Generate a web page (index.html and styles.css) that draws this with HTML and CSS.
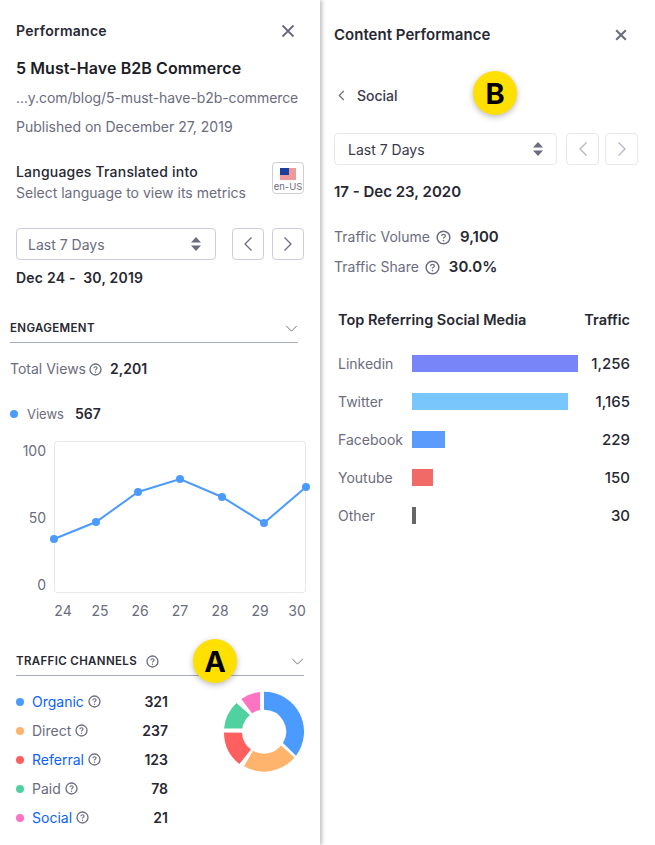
FILE: index.html
```html
<!DOCTYPE html>
<html lang="en">
<head>
<meta charset="utf-8">
<title>Content Performance</title>
<link rel="stylesheet" href="styles.css">
</head>
<body>
<svg class="defs" width="0" height="0" aria-hidden="true">
  <symbol id="help" viewBox="0 0 13 13">
    <circle cx="6.5" cy="6.5" r="5.5" fill="none" stroke="currentColor" stroke-width="1.3"/>
    <path d="M4.9 5.2c0-.9.7-1.4 1.6-1.4s1.6.5 1.6 1.3c0 1.2-1.6 1.1-1.6 2.3" fill="none" stroke="currentColor" stroke-width="1.1"/>
    <circle cx="6.5" cy="9.2" r=".7" fill="currentColor"/>
  </symbol>
  <symbol id="close" viewBox="0 0 14 14">
    <path d="M1.5 1.5l11 11M12.5 1.5l-11 11" fill="none" stroke="currentColor" stroke-width="1.9"/>
  </symbol>
  <symbol id="close-bold" viewBox="0 0 12 12">
    <path d="M1.2 1.2l9.6 9.6M10.8 1.2l-9.6 9.6" fill="none" stroke="currentColor" stroke-width="2.1"/>
  </symbol>
  <symbol id="updown" viewBox="0 0 10 14">
    <path d="M5 0l5 5.5H0zM5 14L0 8.5h10z" fill="currentColor"/>
  </symbol>
  <symbol id="left" viewBox="0 0 10 16">
    <path d="M8.5 1.5L2 8l6.5 6.5" fill="none" stroke="currentColor" stroke-width="1.3"/>
  </symbol>
  <symbol id="right" viewBox="0 0 10 16">
    <path d="M1.5 1.5L8 8l-6.5 6.5" fill="none" stroke="currentColor" stroke-width="1.3"/>
  </symbol>
  <symbol id="back" viewBox="0 0 7 11">
    <path d="M5.8 1L1.3 5.5 5.8 10" fill="none" stroke="currentColor" stroke-width="1.2"/>
  </symbol>
  <symbol id="down" viewBox="0 0 14 8">
    <path d="M1 1l6 6 6-6" fill="none" stroke="currentColor" stroke-width="1.1"/>
  </symbol>
</svg>

<div class="page">
  <aside class="panel panel-left">
    <header class="head head-left">
      <h1 class="panel-title">Performance</h1>
      <svg class="icon-close icon-close-left"><use href="#close"/></svg>
    </header>
    <h2 class="article">5 Must-Have B2B Commerce</h2>
    <p class="meta url">...y.com/blog/5-must-have-b2b-commerce</p>
    <p class="meta published">Published on December 27, 2019</p>

    <div class="lang">
      <div>
        <div class="lang-title">Languages Translated into</div>
        <div class="lang-sub">Select language to view its metrics</div>
      </div>
      <button class="flag-btn">
        <svg class="flag" viewBox="0 0 16 12">
          <rect width="16" height="12" fill="#ef9a9a"/>
          <rect width="9" height="7" fill="#1c3f9e"/>
        </svg>
        <span>en-US</span>
      </button>
    </div>

    <div class="controls controls-left">
      <div class="select select-left">
        <span>Last 7 Days</span>
        <svg class="updown"><use href="#updown"/></svg>
      </div>
      <button class="nav-btn"><svg class="nav-icon"><use href="#left"/></svg></button>
      <button class="nav-btn"><svg class="nav-icon"><use href="#right"/></svg></button>
    </div>
    <div class="range range-left">Dec 24 -&nbsp; 30, 2019</div>

    <div class="section-head section-engagement">
      <span>ENGAGEMENT</span>
      <svg class="chev"><use href="#down"/></svg>
    </div>
    <div class="stat stat-total">
      <span class="stat-label">Total Views</span>
      <svg class="help"><use href="#help"/></svg>
      <strong>2,201</strong>
    </div>
    <div class="views">
      <i class="dot dot-blue"></i>
      <span class="stat-label">Views</span>
      <strong>567</strong>
    </div>

    <svg class="chart" viewBox="10 436 316 189">
      <rect x="54.5" y="441.5" width="251" height="151" rx="3" fill="#fff" stroke="#e7e7ed"/>
      <g class="chart-y">
        <text x="46" y="456">100</text>
        <text x="46" y="523">50</text>
        <text x="46" y="590">0</text>
      </g>
      <g class="chart-x">
        <text x="63" y="616">24</text>
        <text x="100" y="616">25</text>
        <text x="140" y="616">26</text>
        <text x="180" y="616">27</text>
        <text x="220" y="616">28</text>
        <text x="260" y="616">29</text>
        <text x="297" y="616">30</text>
      </g>
      <polyline points="54,539 96,522 138,492 180,479 222,497 264,523 306,487" fill="none" stroke="#4b9bff" stroke-width="2"/>
      <g fill="#4b9bff">
        <circle cx="54" cy="539" r="4"/>
        <circle cx="96" cy="522" r="4"/>
        <circle cx="138" cy="492" r="4"/>
        <circle cx="180" cy="479" r="4"/>
        <circle cx="222" cy="497" r="4"/>
        <circle cx="264" cy="523" r="4"/>
        <circle cx="306" cy="487" r="4"/>
      </g>
    </svg>

    <div class="section-head section-traffic">
      <span class="section-with-help">TRAFFIC CHANNELS <svg class="help"><use href="#help"/></svg></span>
      <svg class="chev"><use href="#down"/></svg>
    </div>
    <div class="channels">
      <ul class="channel-list">
        <li><i class="dot dot-blue"></i><a class="link">Organic</a><svg class="help"><use href="#help"/></svg><b>321</b></li>
        <li><i class="dot dot-orange"></i><span class="stat-label">Direct</span><svg class="help"><use href="#help"/></svg><b>237</b></li>
        <li><i class="dot dot-red"></i><a class="link">Referral</a><svg class="help"><use href="#help"/></svg><b>123</b></li>
        <li><i class="dot dot-green"></i><span class="stat-label">Paid</span><svg class="help"><use href="#help"/></svg><b>78</b></li>
        <li><i class="dot dot-pink"></i><a class="link">Social</a><svg class="help"><use href="#help"/></svg><b>21</b></li>
      </ul>
      <svg class="donut" viewBox="224 691 80 81">
        <path fill="#4b9bff" d="M264 691.7A40 40 0 0 1 296 755.7L283 743A22 22 0 0 0 264 709.7Z"/>
        <path fill="#ffb46e" d="M294.5 757.5A40 40 0 0 1 244 766.3L253 750.7A22 22 0 0 0 281 745.5Z"/>
        <path fill="#ff5f5f" d="M224 732.5A40 40 0 0 0 239.3 764L251 749.5A22 22 0 0 1 242 732.7Z"/>
        <path fill="#50d2a0" d="M224 728.5A40 40 0 0 1 236.5 703L250 715A22 22 0 0 0 242.3 728.5Z"/>
        <path fill="#ff73c3" d="M241.3 699A40 40 0 0 1 260 691.9L260 710A22 22 0 0 0 252 713.3Z"/>
      </svg>
    </div>
  </aside>

  <main class="panel panel-right">
    <header class="head head-right">
      <h1 class="panel-title panel-title-lg">Content Performance</h1>
      <svg class="icon-close icon-close-right"><use href="#close-bold"/></svg>
    </header>
    <div class="back">
      <svg class="back-icon"><use href="#back"/></svg>
      <span>Social</span>
    </div>
    <div class="controls controls-right">
      <div class="select select-right">
        <span>Last 7 Days</span>
        <svg class="updown"><use href="#updown"/></svg>
      </div>
      <button class="nav-btn nav-light"><svg class="nav-icon"><use href="#left"/></svg></button>
      <button class="nav-btn nav-light"><svg class="nav-icon"><use href="#right"/></svg></button>
    </div>
    <div class="range range-right">17 - Dec 23, 2020</div>
    <div class="stat stat-volume">
      <span class="stat-label">Traffic Volume</span>
      <svg class="help help-lg"><use href="#help"/></svg>
      <strong>9,100</strong>
    </div>
    <div class="stat stat-share">
      <span class="stat-label">Traffic Share</span>
      <svg class="help help-lg"><use href="#help"/></svg>
      <strong>30.0%</strong>
    </div>

    <div class="table">
      <div class="table-head"><span>Top Referring Social Media</span><span>Traffic</span></div>
      <div class="table-row"><span class="stat-label">Linkedin</span><div class="track"><i class="bar bar-linkedin" style="width:166px"></i></div><b>1,256</b></div>
      <div class="table-row"><span class="stat-label">Twitter</span><div class="track"><i class="bar bar-twitter" style="width:156px"></i></div><b>1,165</b></div>
      <div class="table-row"><span class="stat-label">Facebook</span><div class="track"><i class="bar bar-facebook" style="width:33px"></i></div><b>229</b></div>
      <div class="table-row"><span class="stat-label">Youtube</span><div class="track"><i class="bar bar-youtube" style="width:21px"></i></div><b>150</b></div>
      <div class="table-row"><span class="stat-label">Other</span><div class="track"><i class="bar bar-other" style="width:4px"></i></div><b>30</b></div>
    </div>
  </main>

  <div class="badge badge-a">A</div>
  <div class="badge badge-b">B</div>
</div>
</body>
</html>
```
FILE: styles.css
```css
* { box-sizing: border-box; }
html, body { margin: 0; padding: 0; background: #fff; }
body {
  font-family: Inter, "Liberation Sans", sans-serif;
  font-size: 14px;
  color: #272833;
  overflow: hidden;
}
.defs { display: block; width: 0; height: 0; }
h1, h2, p, ul { margin: 0; padding: 0; }
ul { list-style: none; }
button { font-family: inherit; background: #fff; padding: 0; margin: 0; }

.page { position: relative; display: flex; width: 655px; height: 845px; overflow: hidden; }
.panel { height: 845px; background: #fff; }
.panel-left {
  width: 320px;
  padding: 0 16px;
  position: relative;
  z-index: 1;
  box-shadow: 2px 0 4px rgba(0, 0, 0, .26);
}
.panel-right { width: 335px; padding: 0 17px 0 14px; }

.head { display: flex; align-items: center; justify-content: space-between; height: 22px; }
.head-left { margin-top: 20px; }
.head-right { margin-top: 24px; }
.panel-title { font-size: 14px; line-height: 22px; font-weight: 600; letter-spacing: .26px; }
.panel-title-lg { font-size: 15px; letter-spacing: .02px; }
.icon-close { width: 14px; height: 14px; color: #6b6c7e; }
.icon-close-left { margin-right: 9px; }
.icon-close-right { width: 12px; height: 12px; margin-right: 11px; }

.article { margin-top: 15px; font-size: 16px; line-height: 22px; font-weight: 600; color: #1c1d26; letter-spacing: .08px; }
.meta { font-size: 14px; line-height: 20px; color: #6b6c7e; }
.url { margin-top: 9px; letter-spacing: -.08px; }
.published { margin-top: 9px; }

.lang { display: flex; justify-content: space-between; align-items: flex-start; margin-top: 25px; }
.lang-title { font-size: 14px; line-height: 20px; font-weight: 500; letter-spacing: .2px; }
.lang-sub { margin-top: 1px; font-size: 14px; line-height: 20px; color: #6b6c7e; }
.flag-btn {
  width: 32px; height: 32px;
  border: 1px solid #cdced9; border-radius: 4px;
  display: flex; flex-direction: column; align-items: center;
  padding-top: 5px;
  color: #6b6c7e;
}
.flag { width: 16px; height: 12px; display: block; }
.flag-btn span { font-size: 9.5px; line-height: 12px; margin-top: 1px; }

.controls { display: flex; }
.controls-left { margin-top: 25px; gap: 8px; }
.controls-right { margin-top: 28px; gap: 6px; }
.select {
  height: 32px; display: flex; align-items: center; justify-content: space-between;
  border: 1px solid #cdced9; border-radius: 4px;
  padding: 0 14px 0 11px; color: #6b6c7e;
}
.select-left { width: 200px; margin-right: 8px; }
.select-right { width: 223px; margin-right: 3px; padding-left: 13px; padding-right: 13px; border-color: #e7e7ed; color: #393a4a; }
.updown { width: 10px; height: 14px; color: #6b6c7e; }
.nav-btn {
  width: 32px; height: 32px;
  border: 1px solid #cdced9; border-radius: 4px;
  display: flex; align-items: center; justify-content: center;
  color: #6b6c7e;
}
.nav-light { width: 33px; border-color: #e7e7ed; color: #b5b6c4; }
.nav-icon { width: 10px; height: 16px; }

.range { font-weight: 600; line-height: 20px; }
.range-left { margin-top: 8px; letter-spacing: .22px; }
.range-right { margin-top: 17px; font-size: 15px; }

.section-head {
  display: flex; align-items: center; justify-content: space-between;
  height: 25px; padding-bottom: 4px;
  font-size: 11.5px; font-weight: 600; letter-spacing: .35px;
}
.section-engagement { margin: 30px 6px 0 -6px; border-bottom: 1px solid #a7a9bc; }
.section-traffic { margin-top: 26px; border-bottom: 1px solid #a7a9bc; }
.section-with-help { display: flex; align-items: center; gap: 9px; }
.chev { width: 13px; height: 7px; color: #6b6c7e; }

.help { width: 13px; height: 13px; color: #6b6c7e; flex: none; }
.help-lg { width: 15px; height: 15px; }

.stat { display: flex; align-items: center; line-height: 20px; }
.stat strong { font-weight: 600; }
.stat-label { color: #6b6c7e; }
.stat-total { margin: 16px 0 0 -6px; }
.stat-total .help { margin: 0 8px 0 3px; }

.views { display: flex; align-items: center; margin: 25px 0 0 -6px; line-height: 20px; }
.views .stat-label { margin: 0 11px 0 9px; font-size: 13px; }
.views strong { font-weight: 600; }

.dot { display: block; width: 8px; height: 8px; border-radius: 50%; flex: none; }
.dot-blue { background: #4b9bff; }
.dot-orange { background: #ffb46e; }
.dot-red { background: #ff5f5f; }
.dot-green { background: #50d2a0; }
.dot-pink { background: #ff73c3; }

.chart { display: block; width: 316px; height: 189px; margin: 12px 0 0 -6px; overflow: visible; }
.chart text { font-family: Inter, "Liberation Sans", sans-serif; font-size: 14px; fill: #6b6c7e; }
.chart-y text { text-anchor: end; }
.chart-x text { text-anchor: middle; }

.channels { display: flex; justify-content: space-between; align-items: flex-start; margin-top: 11px; }
.channel-list { width: 152px; }
.channel-list li { display: flex; align-items: center; height: 29px; }
.channel-list .dot { margin-right: 8px; }
.channel-list .help { margin-left: 4px; }
.channel-list b { margin-left: auto; font-weight: 600; }
.link { color: #0b5fff; }
.donut { width: 80px; height: 81px; margin-top: 4px; display: block; }

.back { display: flex; align-items: center; margin-top: 39px; height: 20px; font-weight: 500; color: #393a4a; }
.back-icon { width: 7px; height: 11px; margin: 0 12px 0 4px; color: #6b6c7e; }

.stat-volume { margin-top: 25px; }
.stat-share { margin-top: 10px; }
.stat-volume .help, .stat-share .help { margin: 0 9px 0 6px; }
.stat-volume strong, .stat-share strong { font-size: 15px; }

.table { margin-top: 33px; padding: 0 8px 0 4px; }
.table-head { display: flex; justify-content: space-between; font-weight: 600; line-height: 20px; margin-bottom: 24px; font-size: 14.5px; }
.table-row { display: flex; align-items: center; height: 18px; margin-bottom: 20px; }
.table-row .stat-label { width: 74px; flex: none; }
.table-row b { font-weight: 500; color: #272833; font-size: 15px; }
.track { flex: 1; }
.bar { display: block; height: 17px; }
.bar-linkedin { background: #7785f8; }
.bar-twitter { background: #78c6fc; }
.bar-facebook { background: #5b9bfb; }
.bar-youtube { background: #f16a67; }
.bar-other { background: #666; }

.badge {
  position: absolute; z-index: 2;
  width: 44px; height: 44px; border-radius: 50%;
  background: #ffe000; color: #000;
  box-shadow: 0 2px 6px rgba(0, 0, 0, .28);
  display: flex; align-items: center; justify-content: center;
  font-size: 29px; font-weight: 700; line-height: 1;
}
.badge-a { left: 193px; top: 639px; }
.badge-b { left: 473px; top: 71px; }
```
